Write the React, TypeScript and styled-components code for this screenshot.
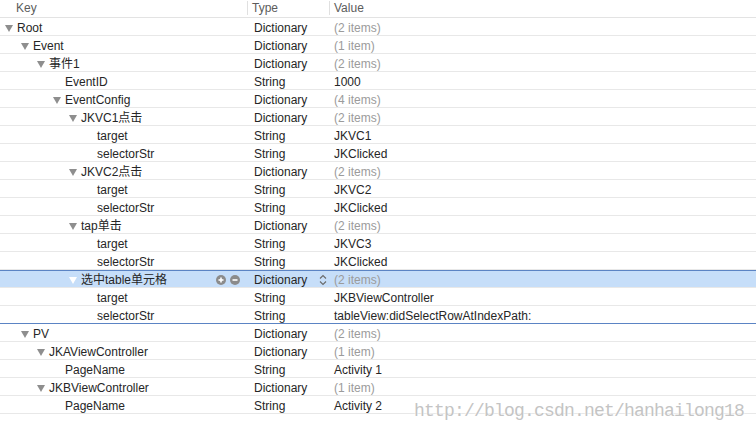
import React from "react";
import styled, { createGlobalStyle } from "styled-components";

const GlobalStyle = createGlobalStyle`
  html, body {
    margin: 0;
    padding: 0;
    background: #ffffff;
  }
  body {
    font-family: "Liberation Sans", Arial, "Noto Sans CJK SC", sans-serif;
    font-size: 12px;
    color: #262626;
  }
`;

type Item = {
  level: number;
  key: string;
  type: string;
  value: string;
  open?: boolean;
  selected?: boolean;
  groupEnd?: boolean;
};

const rows: Item[] = [
  { level: 0, key: "Root", type: "Dictionary", value: "(2 items)", open: true },
  { level: 1, key: "Event", type: "Dictionary", value: "(1 item)", open: true },
  { level: 2, key: "事件1", type: "Dictionary", value: "(2 items)", open: true },
  { level: 3, key: "EventID", type: "String", value: "1000" },
  { level: 3, key: "EventConfig", type: "Dictionary", value: "(4 items)", open: true },
  { level: 4, key: "JKVC1点击", type: "Dictionary", value: "(2 items)", open: true },
  { level: 5, key: "target", type: "String", value: "JKVC1" },
  { level: 5, key: "selectorStr", type: "String", value: "JKClicked" },
  { level: 4, key: "JKVC2点击", type: "Dictionary", value: "(2 items)", open: true },
  { level: 5, key: "target", type: "String", value: "JKVC2" },
  { level: 5, key: "selectorStr", type: "String", value: "JKClicked" },
  { level: 4, key: "tap单击", type: "Dictionary", value: "(2 items)", open: true },
  { level: 5, key: "target", type: "String", value: "JKVC3" },
  { level: 5, key: "selectorStr", type: "String", value: "JKClicked" },
  { level: 4, key: "选中table单元格", type: "Dictionary", value: "(2 items)", open: true, selected: true },
  { level: 5, key: "target", type: "String", value: "JKBViewController" },
  { level: 5, key: "selectorStr", type: "String", value: "tableView:didSelectRowAtIndexPath:", groupEnd: true },
  { level: 1, key: "PV", type: "Dictionary", value: "(2 items)", open: true },
  { level: 2, key: "JKAViewController", type: "Dictionary", value: "(1 item)", open: true },
  { level: 3, key: "PageName", type: "String", value: "Activity 1" },
  { level: 2, key: "JKBViewController", type: "Dictionary", value: "(1 item)", open: true },
  { level: 3, key: "PageName", type: "String", value: "Activity 2" },
];

const Editor = styled.div`
  position: relative;
  width: 756px;
  height: 433px;
  overflow: hidden;
  background: #ffffff;
`;

const Columns = `
  display: grid;
  grid-template-columns: 248px 82px 1fr;
`;

const Header = styled.div`
  ${Columns}
  height: 18px;
  box-sizing: border-box;
  padding-top: 1px;
  border-bottom: 1px solid #e3e3e3;
  color: #5c5c5c;
  line-height: 14px;
`;

const HeadCell = styled.div<{ $pad: number; $divider?: boolean }>`
  position: relative;
  padding-left: ${(p) => p.$pad}px;
  ${(p) =>
    p.$divider &&
    `
    &::before {
      content: "";
      position: absolute;
      left: -1px;
      top: 0;
      bottom: 2px;
      border-left: 1px solid #e0e0e0;
    }
  `}
`;

const Row = styled.div<{ $selected?: boolean; $groupEnd?: boolean }>`
  ${Columns}
  height: 18px;
  box-sizing: border-box;
  padding-top: 3px;
  line-height: 14px;
  border-bottom: 1px solid ${(p) => (p.$groupEnd ? "#5b84c4" : "#e8e8e8")};
  background: ${(p) => (p.$selected ? "#c6def9" : "#ffffff")};
  ${(p) => p.$selected && `box-shadow: inset 0 1px 0 #5b84c4;`}
`;

const KeyCell = styled.div<{ $level: number }>`
  display: flex;
  align-items: center;
  padding-left: ${(p) => 5 + p.$level * 16}px;
  padding-right: 8px;
  white-space: nowrap;
`;

const Toggle = styled.span<{ $light?: boolean }>`
  display: inline-flex;
  width: 12px;
  flex: none;
  svg {
    fill: ${(p) => (p.$light ? "#ffffff" : "#8e8e8e")};
  }
`;

const Spacer = styled.span`
  display: inline-block;
  width: 12px;
  flex: none;
`;

const RowButtons = styled.span`
  display: flex;
  gap: 4px;
  margin-left: auto;
`;

const RoundButton = styled.span`
  display: inline-flex;
  width: 10px;
  height: 10px;
  svg {
    display: block;
  }
`;

const TypeCell = styled.div`
  display: flex;
  align-items: center;
  justify-content: space-between;
  padding-left: 6px;
  padding-right: 3px;
`;

const ValueCell = styled.div<{ $muted: boolean }>`
  padding-left: 4px;
  white-space: nowrap;
  color: ${(p) => (p.$muted ? "#9b9b9b" : "#262626")};
`;

const Watermark = styled.div`
  position: absolute;
  left: 414px;
  top: 401px;
  font-family: "Liberation Mono", "Courier New", monospace;
  font-size: 18px;
  letter-spacing: -0.8px;
  color: #c4c4c4;
  text-shadow: 0 0 2px #ffffff, 0 0 2px #ffffff;
  white-space: nowrap;
`;

const Triangle = () => (
  <svg width="8" height="7" viewBox="0 0 8 7">
    <polygon points="0,0 8,0 4,7" />
  </svg>
);

const PlusIcon = () => (
  <svg width="10" height="10" viewBox="0 0 10 10">
    <circle cx="5" cy="5" r="5" fill="#8b8b8b" />
    <rect x="2.5" y="4.2" width="5" height="1.6" fill="#fff" />
    <rect x="4.2" y="2.5" width="1.6" height="5" fill="#fff" />
  </svg>
);

const MinusIcon = () => (
  <svg width="10" height="10" viewBox="0 0 10 10">
    <circle cx="5" cy="5" r="5" fill="#8b8b8b" />
    <rect x="2.5" y="4.2" width="5" height="1.6" fill="#fff" />
  </svg>
);

const Stepper = () => (
  <svg width="8" height="12" viewBox="0 0 8 12">
    <polyline points="1,4.5 4,1.5 7,4.5" fill="none" stroke="#6a6a6a" strokeWidth="1.1" />
    <polyline points="1,7.5 4,10.5 7,7.5" fill="none" stroke="#6a6a6a" strokeWidth="1.1" />
  </svg>
);

export default function App() {
  return (
    <Editor>
      <GlobalStyle />
      <Header>
        <HeadCell $pad={16}>Key</HeadCell>
        <HeadCell $pad={4} $divider>
          Type
        </HeadCell>
        <HeadCell $pad={4} $divider>
          Value
        </HeadCell>
      </Header>
      {rows.map((r, i) => (
        <Row key={i} $selected={r.selected} $groupEnd={r.groupEnd}>
          <KeyCell $level={r.level}>
            {r.open ? (
              <Toggle $light={r.selected}>
                <Triangle />
              </Toggle>
            ) : (
              <Spacer />
            )}
            {r.key}
            {r.selected && (
              <RowButtons>
                <RoundButton>
                  <PlusIcon />
                </RoundButton>
                <RoundButton>
                  <MinusIcon />
                </RoundButton>
              </RowButtons>
            )}
          </KeyCell>
          <TypeCell>
            {r.type}
            {r.selected && <Stepper />}
          </TypeCell>
          <ValueCell $muted={r.value.startsWith("(")}>{r.value}</ValueCell>
        </Row>
      ))}
      <Watermark>http://blog.csdn.net/hanhailong18</Watermark>
    </Editor>
  );
}
